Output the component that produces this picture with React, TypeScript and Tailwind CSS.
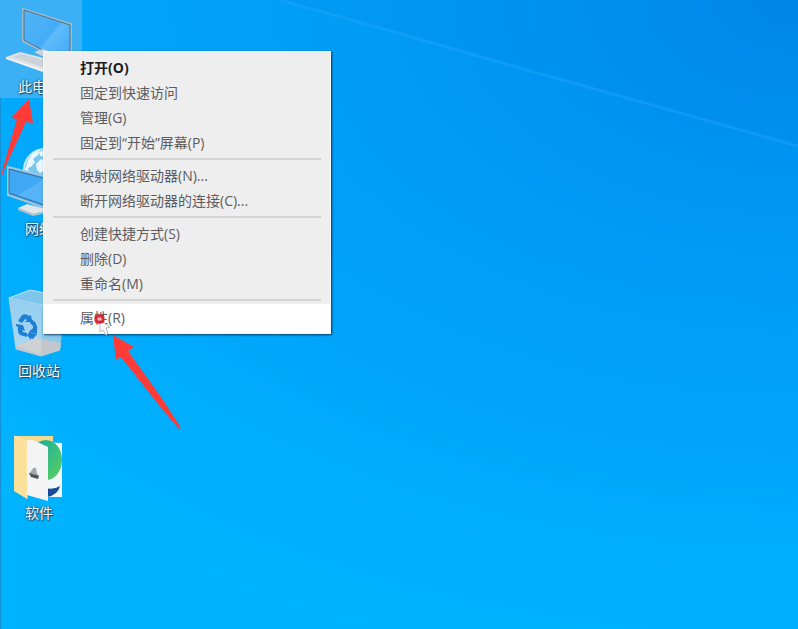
import React from "react";
import { clsx } from "clsx";

type MenuEntry = {
  label: string;
  isDefault?: boolean;
  isActive?: boolean;
};

const menuGroups: MenuEntry[][] = [
  [{ label: "打开(O)", isDefault: true }, { label: "固定到快速访问" }, { label: "管理(G)" }, { label: "固定到“开始”屏幕(P)" }],
  [{ label: "映射网络驱动器(N)..." }, { label: "断开网络驱动器的连接(C)..." }],
  [{ label: "创建快捷方式(S)" }, { label: "删除(D)" }, { label: "重命名(M)" }],
  [{ label: "属性(R)", isActive: true }],
];

function ComputerIcon() {
  return (
    <svg aria-hidden="true" className="block h-[76px] w-[82px]" viewBox="0 0 82 76">
      <defs>
        <linearGradient id="pc-screen" x1="0" x2="1" y1="0" y2="1">
          <stop offset="0" stopColor="#52b6f6" />
          <stop offset="0.5" stopColor="#44acf8" />
          <stop offset="0.54" stopColor="#5dbbfb" />
          <stop offset="1" stopColor="#3ba6f7" />
        </linearGradient>
      </defs>
      <path d="M23 9 L71 24 V66 L23 41 Z" fill="url(#pc-screen)" stroke="#9fb9c9" strokeWidth="2" />
      <path d="M24 10 L70 25 V65 L24 40 Z" fill="none" stroke="#4b7390" strokeWidth="1" />
      <path d="M34 52 L43 49 L60 55 L50 60 Z" fill="#cdd5db" />
      <path d="M6 57 L20 52 L56 61 L43 71 Z" fill="#dfe3e6" />
      <path d="M6 57 L43 70 V72 L6 59 Z" fill="#f3f5f6" />
      <path d="M13 57 L21 54 L48 61 L42 67 Z" fill="#ccd2d7" />
    </svg>
  );
}

function NetworkIcon() {
  return (
    <svg aria-hidden="true" className="block h-[76px] w-[82px]" viewBox="0 0 82 76">
      <circle cx="45" cy="28" fill="#79c6ee" r="21" stroke="#c5e8f8" strokeWidth="2" />
      <path
        d="M25 28 L28 18 L33 11 L40 8 L38 13 L33 17 L35 20 L31 25 L28 26 L29 31 Z M36 22 L41 17 L46 19 L45 28 L40 31 L37 28 Z M39 10 L45 8 V15 L40 14 Z"
        fill="#e8f6fd"
      />
      <path d="M8 25 L60 38 V71 L8 53 Z" fill="#3b9df0" stroke="#9fc7df" strokeWidth="2" />
      <path d="M9 27 L58 40 V68 L9 51 Z" fill="#40a7f4" stroke="#3f7396" strokeWidth="1" />
      <path d="M18 53 L46 36 L57 40 V66 Z" fill="#67baf8" opacity="0.6" />
      <path d="M18 66 L27 62 L50 68 L33 72 Z" fill="#e0e6e9" />
      <path d="M18 66 L33 72 L50 68 V70 L33 74 L18 68 Z" fill="#b7c4cc" />
    </svg>
  );
}

function RecycleBinIcon() {
  return (
    <svg aria-hidden="true" className="block h-[76px] w-[82px]" viewBox="0 0 82 76">
      <defs>
        <linearGradient id="bin-front" x1="0" x2="0" y1="0" y2="1">
          <stop offset="0" stopColor="#92cdf0" />
          <stop offset="0.8" stopColor="#a9d8f2" />
          <stop offset="1" stopColor="#c6d3db" />
        </linearGradient>
      </defs>
      <path d="M9 14 L30 6 L66 13 L41 21 Z" fill="#7fc6ec" stroke="#c2e4f4" strokeWidth="1" />
      <path d="M9 14 L41 21 V72 L16 65 Z" fill="url(#bin-front)" />
      <path d="M41 21 L66 13 L60 66 L41 72 Z" fill="#8bc9ec" />
      <path d="M16 62 L36 54 L61 59 L60 66 L41 72 L16 65 Z" fill="#c3c7cb" />
      <path d="M16 62 L36 54 L41 56 V71 Z" fill="#ced2d5" />
      <path d="M9 14 L16 65 L41 72 L60 66" fill="none" stroke="#b9cbd5" strokeWidth="1" />
      <g fill="#1f7fd3">
        <path d="M18 37 L22 31 Q26 29 29 32 L31 31 L32 38 L25 38 L27 36 L25 35 L22 39 Z" />
        <path d="M31 35 L35 38 Q38 43 37 46 L37 50 L29 48 L33 44 L33 42 L30 39 Z" />
        <path d="M16 40 L23 41 L25 47 L22 46 L23 48 L27 49 V53 L20 51 Q17 48 18 43 L16 42 Z" />
        <path d="M27 51 L31 46 V49 L37 50 L33 55 L31 54 V56 Z" />
      </g>
    </svg>
  );
}

function FolderIcon() {
  return (
    <svg aria-hidden="true" className="block h-[76px] w-[82px]" viewBox="0 0 82 76">
      <defs>
        <linearGradient id="folder-disc" x1="0" x2="1" y1="0" y2="1">
          <stop offset="0" stopColor="#19aa9b" />
          <stop offset="0.5" stopColor="#35bd83" />
          <stop offset="1" stopColor="#5ed05b" />
        </linearGradient>
        <clipPath id="folder-page">
          <path d="M30 14 L62 14 V71 H47 Z" />
        </clipPath>
      </defs>
      <path d="M14 10 H53 V60 H14 Z" fill="#f5d98e" />
      <path d="M44 16 L62 17 V71 H44 Z" fill="#f2f7fb" />
      <g clipPath="url(#folder-page)">
        <ellipse cx="46" cy="34" fill="url(#folder-disc)" rx="16" ry="20" />
        <path d="M45 62 Q54 64 60 60 Q58 69 47 71 Z" fill="#174f97" />
      </g>
      <path d="M27 14 L33 14 L48 21 V75 L27 69 Z" fill="#f4f4f5" />
      <path d="M32 44 Q33 41 36 42 L37 48 L39 49 L38 51 L32 50 L29 48 Z" fill="#a3a5a6" />
      <path d="M29 47 L39 50 L38 53 L31 51 Z" fill="#505355" />
      <path d="M14 10 L27 16 V73 L14 65 Z" fill="#fbe09a" />
      <path d="M14 10 L27 16 V73" fill="none" stroke="#fdebb9" strokeWidth="1" />
    </svg>
  );
}

const shortcuts = [
  { label: "此电脑", Icon: ComputerIcon, selected: true },
  { label: "网络", Icon: NetworkIcon, selected: false },
  { label: "回收站", Icon: RecycleBinIcon, selected: false },
  { label: "软件", Icon: FolderIcon, selected: false },
];

function Wallpaper() {
  return (
    <div
      aria-hidden="true"
      className="absolute inset-0 bg-[radial-gradient(150%_120%_at_100%_0%,#0086ea_0%,#0090f0_15%,#009bf6_35%,#00a3fa_56%,#00adff_74%,#00b3ff_90%)]"
    >
      <svg className="absolute inset-x-0 top-0 h-[160px] w-full" preserveAspectRatio="none" viewBox="0 0 798 160">
        <path d="M280 0 Q400 33 520 68 L798 146 V0 Z" fill="#0080e0" opacity="0.12" />
        <path d="M280 0 Q400 33 520 68 L798 146" fill="none" opacity="0.4" stroke="#22a8ff" strokeWidth="3" />
      </svg>
      <div className="absolute inset-y-0 left-0 w-px bg-[#1590d4]" />
    </div>
  );
}

function DesktopShortcuts() {
  return (
    <ul className="relative flex w-[82px] flex-col gap-[44px]">
      {shortcuts.map(({ label, Icon, selected }) => (
        <li key={label}>
          <button className={clsx("block w-full", selected && "bg-[#3cb0f4]")} type="button">
            <Icon />
            <span className="block pr-1 text-center text-[14px] leading-[22px] text-[#f4f8fa] [text-shadow:1px_1px_1px_#1d4a68,0_0_2px_#2b5a78,0_0_2px_#2b5a78]">
              {label}
            </span>
          </button>
        </li>
      ))}
    </ul>
  );
}

function ContextMenu() {
  return (
    <div
      className="absolute left-[43px] top-[51px] w-[288px] border border-[#f8f8f8] bg-[#eeeeef] pt-[3px] text-[14px] text-[#5c5c5e] shadow-[1px_1px_2px_rgba(0,40,70,0.85)]"
      role="menu"
    >
      {menuGroups.map((group, index) => (
        <React.Fragment key={group[0].label}>
          {index > 0 && <div className="mx-[9px] my-[3px] h-[2px] bg-[#d4d4d6]" role="separator" />}
          {group.map(({ label, isDefault, isActive }) => (
            <button
              className={clsx(
                "block w-full whitespace-nowrap pl-9 text-left",
                isDefault && "font-bold text-[#1c1c1c]",
                isActive ? "bg-white pb-px leading-[28px]" : "leading-[25px]",
              )}
              key={label}
              role="menuitem"
              type="button"
            >
              {label}
            </button>
          ))}
        </React.Fragment>
      ))}
    </div>
  );
}

function Pointer() {
  return (
    <svg aria-hidden="true" className="pointer-events-none absolute left-[92px] top-[312px] h-6 w-6" viewBox="0 0 24 24">
      <path d="M8 8 V20 L11 18 L14 23 L16 21 L14 16 L18 15 Z" fill="#fcfcfc" stroke="#bdb9ba" strokeWidth="1" />
      <rect fill="#f4b9bf" height="6" rx="2" stroke="#d8283a" strokeWidth="3" width="7" x="4" y="4" />
    </svg>
  );
}

function Annotations() {
  return (
    <>
      <svg aria-hidden="true" className="pointer-events-none absolute left-0 top-[98px] h-[78px] w-[34px]" viewBox="0 0 34 78">
        <path d="M29 1 L33 25 L26 24 L4 72 L2 78 L1 77 L17 21 L11 20 Z" fill="#ff3b38" />
      </svg>
      <svg aria-hidden="true" className="pointer-events-none absolute left-[112px] top-[335px] h-[94px] w-[69px]" viewBox="0 0 69 94">
        <path d="M1 0 L22 12 L16 16 L51 65 L69 93 L67 94 L50 74 L9 22 L4 25 Z" fill="#ff3b38" />
      </svg>
    </>
  );
}

export default function App() {
  return (
    <main className="relative min-h-screen overflow-hidden font-['Open_Sans','Noto_Sans_CJK_SC',sans-serif]">
      <Wallpaper />
      <DesktopShortcuts />
      <ContextMenu />
      <Pointer />
      <Annotations />
    </main>
  );
}
